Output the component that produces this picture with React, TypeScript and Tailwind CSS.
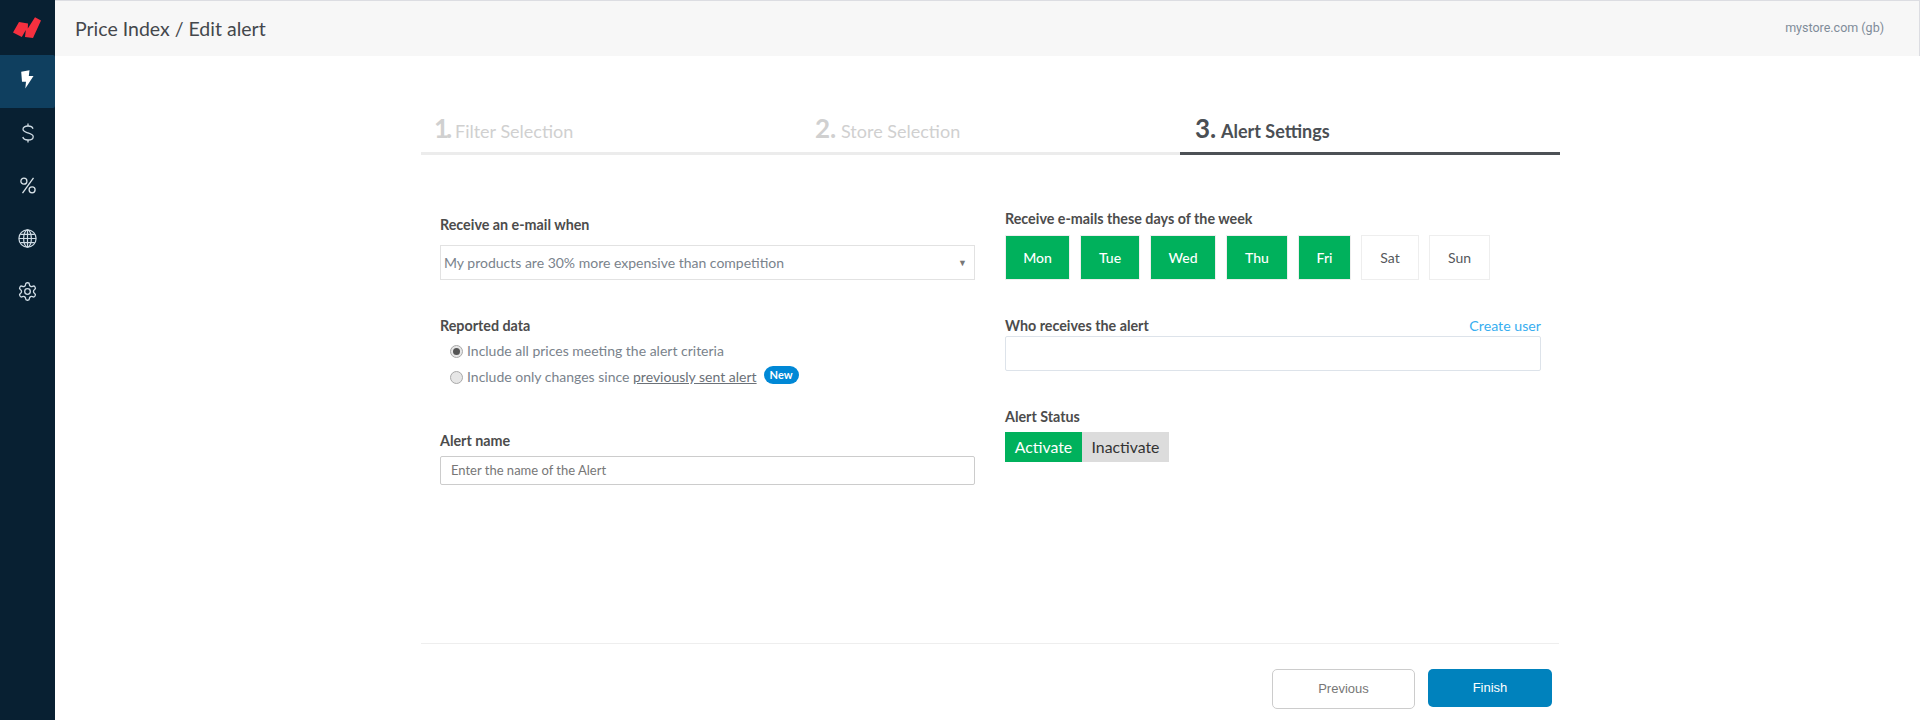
import React from "react";

const sans = "font-['Lato','Open_Sans',sans-serif]";

function Logo() {
  return (
    <svg width="29" height="22" viewBox="0 0 29 22" fill="#f6303f">
      <path d="M0 15.5 L6 5 L15 6.5 L14.8 11.5 L22 0.3 L28 3.5 L20 21 L12 20 L12.8 13 L8.8 20 Z" />
    </svg>
  );
}

function Bolt() {
  return (
    <svg width="13" height="19" viewBox="0 0 13 19" fill="#ffffff">
      <path d="M0.2 1.7 L8.5 0.3 L7.8 6 L12.5 6 L4.3 18.6 L5 11.7 L1 11.7 Z" />
    </svg>
  );
}

function Dollar() {
  return (
    <svg width="14" height="20" viewBox="0 0 14 20" fill="none" stroke="#cfdbe4" strokeWidth="1.3">
      <path d="M12 5.8 C11.4 3.8 9.4 3 7 3 C4.2 3 2 4.2 2 6.3 C2 8.5 4.4 9.1 7 9.9 C9.8 10.7 12.2 11.4 12.2 13.7 C12.2 15.8 9.8 17 7 17 C4.4 17 2.3 16 1.8 14" />
      <path d="M7 0.5 V3 M7 17 V19.5" />
    </svg>
  );
}

function PercentIcon() {
  return (
    <svg width="16" height="17" viewBox="0 0 16 17" fill="none" stroke="#dbe4ea" strokeWidth="1.3">
      <circle cx="3.9" cy="4.2" r="3" />
      <circle cx="12.1" cy="12.8" r="3" />
      <path d="M13.5 0.8 L2.5 16.2" />
    </svg>
  );
}

function GlobeIcon() {
  return (
    <svg width="19" height="19" viewBox="0 0 19 19" fill="none" stroke="#cfdbe4" strokeWidth="1.2">
      <circle cx="9.5" cy="9.5" r="8.6" />
      <ellipse cx="9.5" cy="9.5" rx="3.9" ry="8.6" />
      <path d="M9.5 1 V18 M1 9.5 H18 M2.2 5.4 H16.8 M2.2 13.6 H16.8" />
    </svg>
  );
}

function GearIcon() {
  return (
    <svg width="21" height="21" viewBox="0 0 24 24" fill="none" stroke="#cfdbe4" strokeWidth="1.5" strokeLinejoin="round">
      <path d="M12.22 2h-.44a2 2 0 0 0-2 2v.18a2 2 0 0 1-1 1.73l-.43.25a2 2 0 0 1-2 0l-.15-.08a2 2 0 0 0-2.73.73l-.22.38a2 2 0 0 0 .73 2.73l.15.1a2 2 0 0 1 1 1.72v.51a2 2 0 0 1-1 1.74l-.15.09a2 2 0 0 0-.73 2.73l.22.38a2 2 0 0 0 2.73.73l.15-.08a2 2 0 0 1 2 0l.43.25a2 2 0 0 1 1 1.73V20a2 2 0 0 0 2 2h.44a2 2 0 0 0 2-2v-.18a2 2 0 0 1 1-1.73l.43-.25a2 2 0 0 1 2 0l.15.08a2 2 0 0 0 2.73-.73l.22-.39a2 2 0 0 0-.73-2.73l-.15-.08a2 2 0 0 1-1-1.74v-.5a2 2 0 0 1 1-1.74l.15-.09a2 2 0 0 0 .73-2.73l-.22-.38a2 2 0 0 0-2.73-.73l-.15.08a2 2 0 0 1-2 0l-.43-.25a2 2 0 0 1-1-1.73V4a2 2 0 0 0-2-2z" />
      <circle cx="12" cy="12" r="3.2" />
    </svg>
  );
}

function Sidebar() {
  const item = "h-[53px] pb-[4px] flex items-center justify-center";
  return (
    <aside className="w-[55px] shrink-0 bg-[#082032] flex flex-col">
      <div className="h-[55px] flex items-center justify-center pt-[1px]">
        <Logo />
      </div>
      <div className={`${item} bg-[#0f3f5f] rounded-r-[2px]`}>
        <Bolt />
      </div>
      <div className={item}><Dollar /></div>
      <div className={item}><PercentIcon /></div>
      <div className={item}><GlobeIcon /></div>
      <div className={item}><GearIcon /></div>
    </aside>
  );
}

function Step({ num, numW, label, active, w, pl }: { num: string; numW: string; label: string; active?: boolean; w: string; pl: string }) {
  return (
    <div className={`${w} ${pl} h-[45px] flex items-baseline border-b-[3px] ${active ? "border-[#4d5156] text-[#4b4f54] font-bold" : "border-[#ececec] text-[#d0d0d0]"}`}>
      <span className={`${numW} text-[26px] leading-[36px] font-bold`}>{num}</span>
      <span className="text-[18px] leading-[36px]">{label}</span>
    </div>
  );
}

function Label({ children }: { children: React.ReactNode }) {
  return <div className="text-[14.3px] leading-[18px] font-bold text-[#4c4c4c]">{children}</div>;
}

function Radio({ checked }: { checked?: boolean }) {
  return (
    <span className="w-[13px] h-[13px] rounded-full border border-[#a9a9a9] bg-[#e6e6e6] flex items-center justify-center shrink-0">
      {checked && <span className="w-[7px] h-[7px] rounded-full bg-[#555555]" />}
    </span>
  );
}

const days = [
  { d: "Mon", w: "w-[65px]", on: true },
  { d: "Tue", w: "w-[60px]", on: true },
  { d: "Wed", w: "w-[66px]", on: true },
  { d: "Thu", w: "w-[62px]", on: true },
  { d: "Fri", w: "w-[53px]", on: true },
  { d: "Sat", w: "w-[58px]", on: false },
  { d: "Sun", w: "w-[61px]", on: false },
];

export default function App() {
  return (
    <div className={`flex h-[720px] w-[1920px] bg-white overflow-hidden ${sans}`}>
      <Sidebar />
      <main className="flex-1 flex flex-col min-w-0">
        <header className="h-[56px] shrink-0 bg-[#f7f7f7] border-t border-t-[#dcdde2] border-r border-r-[#dcdde2] flex items-center justify-between pl-[20px] pr-[35px]">
          <h1 className="text-[19.5px] font-normal text-[#44474c]">Price Index / Edit alert</h1>
          <span className="text-[12.5px] text-[#7f8c99] font-['Roboto',sans-serif]">mystore.com (gb)</span>
        </header>

        <div className="ml-[366px] w-[1139px] flex-1 flex flex-col">
          <div className="flex mt-[54px]">
            <Step num="1." numW="w-[21px] tracking-[-3px]" pl="pl-[13px]" label="Filter Selection" w="w-[380px]" />
            <Step num="2." numW="w-[26px]" pl="pl-[14px]" label="Store Selection" w="w-[379px]" />
            <Step num="3." numW="w-[26px]" pl="pl-[15px]" label="Alert Settings" active w="w-[380px]" />
          </div>

          <div className="flex gap-[30px] px-[19px] h-[488px]">
            <div className="w-[535px] flex flex-col pt-[61px]">
              <Label>Receive an e-mail when</Label>
              <div className="mt-[11px] h-[35px] border border-[#e2e2e2] pl-[3px] pr-[7px] flex items-center justify-between text-[14px] text-[#7a838c]">
                <span>My products are 30% more expensive than competition</span>
                <span className="text-[9px] text-[#777777]">▼</span>
              </div>

              <div className="mt-[37px]"><Label>Reported data</Label></div>
              <div className="mt-[7px] pl-[10px] flex flex-col gap-[8px] text-[14px] text-[#7a838c]">
                <div className="flex items-center gap-[4px] h-[18px]">
                  <Radio checked />
                  <span className="-translate-y-px">Include all prices meeting the alert criteria</span>
                </div>
                <div className="flex items-center gap-[4px] h-[18px]">
                  <Radio />
                  <span className="-translate-y-px">Include only changes since <span className="underline text-[#6b7178]">previously sent alert</span></span>
                  <span className="ml-[3px] -mt-[4px] h-[18px] px-[6px] rounded-full bg-[#0088d6] text-white text-[11px] font-bold leading-[18px]">New</span>
                </div>
              </div>

              <div className="mt-[46px]"><Label>Alert name</Label></div>
              <div className="mt-[6px] h-[29px] border border-[#cccccc] rounded-[2px] pl-[10px] flex items-center text-[13px] text-[#777777]">
                Enter the name of the Alert
              </div>
            </div>

            <div className="w-[536px] flex flex-col pt-[55px]">
              <Label>Receive e-mails these days of the week</Label>
              <div className="mt-[7px] flex gap-[10px]">
                {days.map((x) => (
                  <div
                    key={x.d}
                    className={`${x.w} h-[45px] border flex items-center justify-center text-[14px] ${x.on ? "bg-[#00b15c] border-[#eeeeee] text-white font-medium" : "bg-white border-[#eeeeee] text-[#55585c]"}`}
                  >
                    {x.d}
                  </div>
                ))}
              </div>

              <div className="mt-[37px] flex items-center justify-between">
                <Label>Who receives the alert</Label>
                <a className="text-[14.2px] leading-[18px] text-[#37aef0]">Create user</a>
              </div>
              <div className="mt-[1px] h-[35px] border border-[#dde3ea] rounded-[2px]" />

              <div className="mt-[37px]"><Label>Alert Status</Label></div>
              <div className="mt-[6px] flex h-[30px] text-[15.8px]">
                <div className="w-[77px] bg-[#00b15c] text-white flex items-center justify-center">Activate</div>
                <div className="w-[87px] bg-[#dcdcdc] text-[#333333] flex items-center justify-center">Inactivate</div>
              </div>
            </div>
          </div>

          <footer className="mr-[1px] border-t border-[#eeeeee] flex justify-end items-start gap-[13px] pt-[25px] pr-[7px] font-['Liberation_Sans',sans-serif] text-[13px]">
            <button className="w-[143px] h-[40px] border border-[#cccccc] rounded-[5px] bg-white text-[#777777]">Previous</button>
            <button className="w-[124px] h-[38px] rounded-[5px] bg-[#0082bd] text-white">Finish</button>
          </footer>
        </div>
      </main>
    </div>
  );
}
